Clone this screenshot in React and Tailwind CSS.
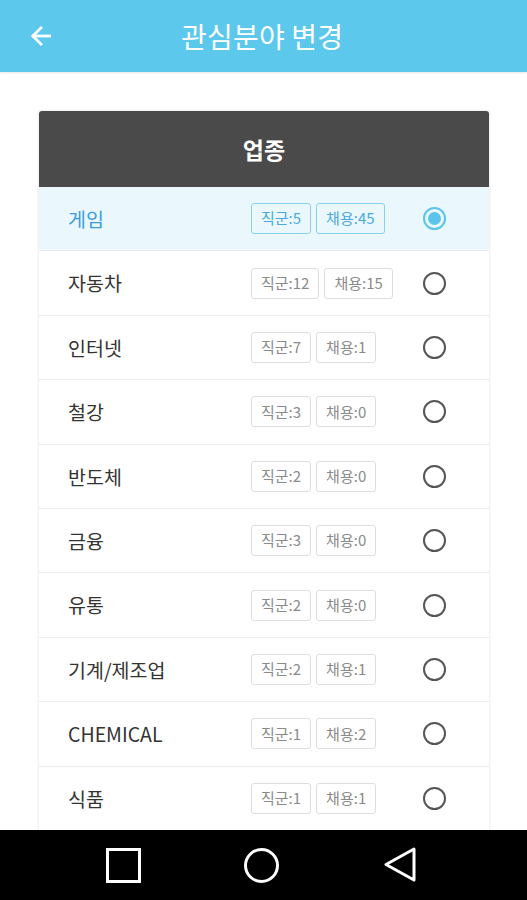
import React, { useState } from 'react';

const industries = [
  { name: '게임', jobs: 5, hires: 45 },
  { name: '자동차', jobs: 12, hires: 15 },
  { name: '인터넷', jobs: 7, hires: 1 },
  { name: '철강', jobs: 3, hires: 0 },
  { name: '반도체', jobs: 2, hires: 0 },
  { name: '금융', jobs: 3, hires: 0 },
  { name: '유통', jobs: 2, hires: 0 },
  { name: '기계/제조업', jobs: 2, hires: 1 },
  { name: 'CHEMICAL', jobs: 1, hires: 2 },
  { name: '식품', jobs: 1, hires: 1 },
];

function Badge({ children, active }) {
  return (
    <span
      className={`inline-flex h-[31px] items-center rounded-[3px] border px-[9px] text-[15px] ${
        active ? 'border-[#86d3ef] text-[#4aa8e0]' : 'border-[#dedede] text-[#8a8a8a]'
      }`}
    >
      {children}
    </span>
  );
}

function Radio({ checked }) {
  if (checked) {
    return (
      <span className="flex h-[23px] w-[23px] items-center justify-center rounded-full border-2 border-[#5bc4ea]">
        <span className="h-[13px] w-[13px] rounded-full bg-[#5bc4ea]" />
      </span>
    );
  }
  return <span className="h-[23px] w-[23px] rounded-full border-2 border-[#555]" />;
}

export default function App() {
  const [selected, setSelected] = useState(0);

  return (
    <div
      className="relative h-[900px] w-[527px] overflow-hidden bg-white"
      style={{ fontFamily: '"Noto Sans CJK KR", "Noto Sans", sans-serif' }}
    >
      {/* 상단 바 */}
      <div className="flex h-[72px] items-center bg-[#5bc8ec] shadow-[0_1px_2px_rgba(0,0,0,0.1)]">
        <button className="ml-[27px] flex h-[28px] w-[28px] items-center justify-center text-white">
          <svg width="26" height="26" viewBox="0 0 24 24" fill="none" stroke="currentColor" strokeWidth="2.6" strokeLinecap="square">
            <path d="M20 12H5" />
            <path d="M12 4.5 4.5 12l7.5 7.5" />
          </svg>
        </button>
        <h1 className="ml-[126px] text-[28px] font-normal tracking-[0.2px] text-white">관심분야 변경</h1>
      </div>

      {/* 업종 카드 */}
      <div className="ml-[39px] mt-[39px] w-[450px] rounded-t-[3px] bg-white shadow-[0_0_3px_rgba(0,0,0,0.15)]">
        <div className="flex h-[76px] items-center justify-center rounded-t-[3px] bg-[#4a4a4a]">
          <span className="text-[23px] font-bold text-white">업종</span>
        </div>
        {industries.map((item, idx) => {
          const active = idx === selected;
          return (
            <div
              key={item.name}
              onClick={() => setSelected(idx)}
              className={`flex h-[64.4px] items-center border-b border-[#ececec] ${active ? 'bg-[#eaf8fd]' : 'bg-white'}`}
            >
              <span className={`w-[212px] pl-[29px] text-[19.5px] ${active ? 'text-[#3c9be2]' : 'text-[#333]'}`}>
                {item.name}
              </span>
              <div className="flex w-[172px] gap-[5px]">
                <Badge active={active}>직군:{item.jobs}</Badge>
                <Badge active={active}>채용:{item.hires}</Badge>
              </div>
              <Radio checked={active} />
            </div>
          );
        })}
      </div>

      {/* 안드로이드 내비게이션 바 */}
      <div className="absolute bottom-0 left-0 flex h-[70px] w-full items-center bg-black pl-[106px]">
        <span className="h-[35px] w-[35px] border-[3px] border-white" />
        <span className="ml-[103px] h-[35px] w-[35px] rounded-full border-[3px] border-white" />
        <svg className="ml-[105px]" width="32" height="36" viewBox="0 0 32 36" fill="none" stroke="white" strokeWidth="3" strokeLinejoin="round">
          <path d="M30 2 2 17.5 30 33Z" />
        </svg>
      </div>
    </div>
  );
}
